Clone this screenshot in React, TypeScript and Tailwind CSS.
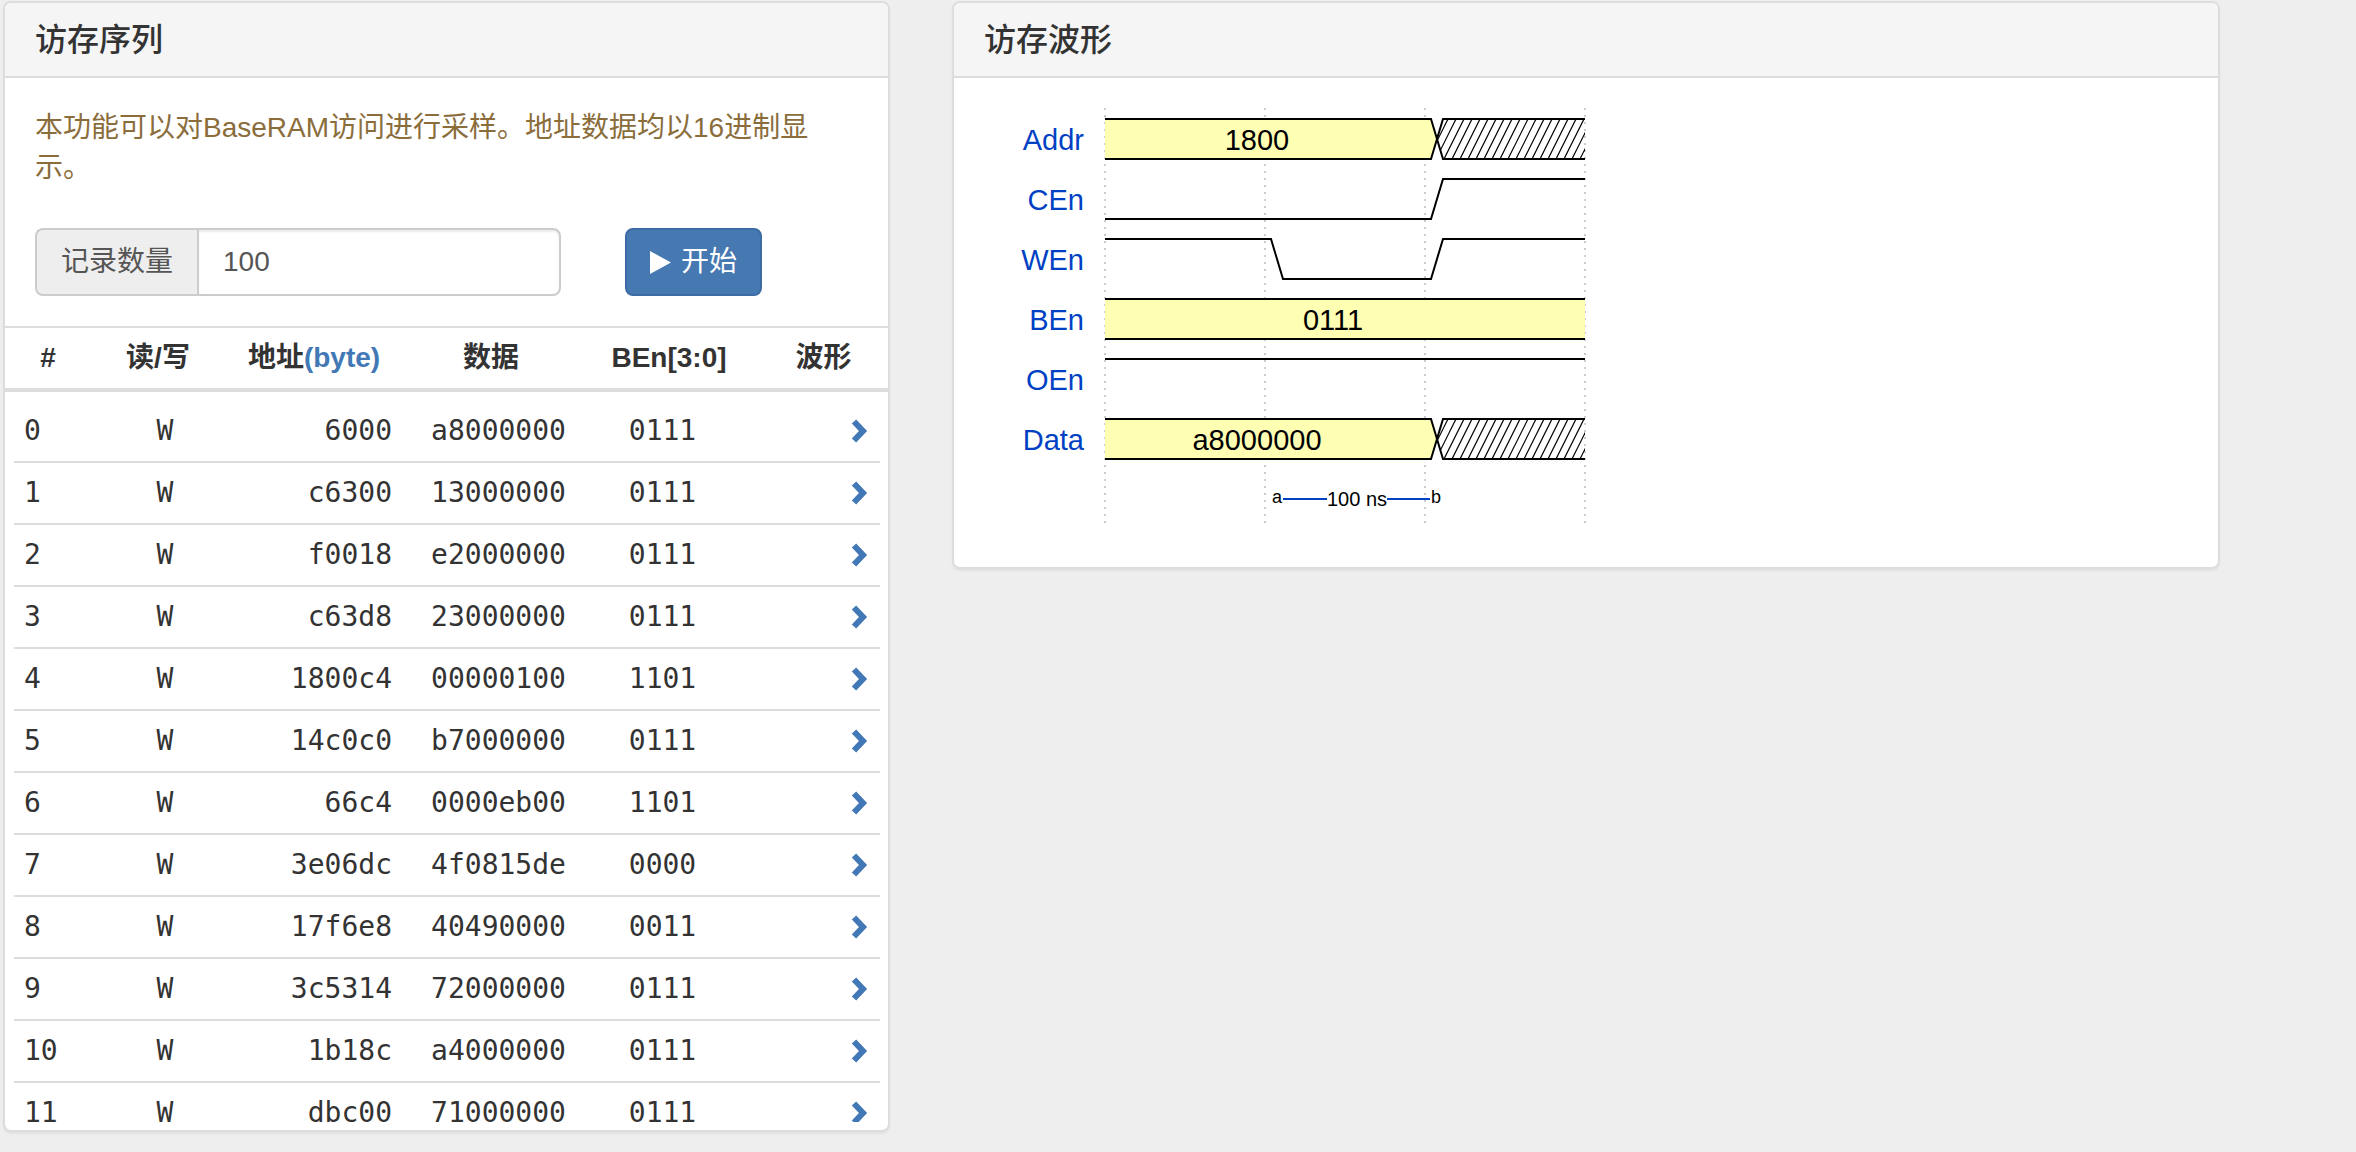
import React from "react";

type Row = { id: number; rw: string; addr: string; data: string; ben: string };

const rows: Row[] = [
  { id: 0, rw: "W", addr: "6000", data: "a8000000", ben: "0111" },
  { id: 1, rw: "W", addr: "c6300", data: "13000000", ben: "0111" },
  { id: 2, rw: "W", addr: "f0018", data: "e2000000", ben: "0111" },
  { id: 3, rw: "W", addr: "c63d8", data: "23000000", ben: "0111" },
  { id: 4, rw: "W", addr: "1800c4", data: "00000100", ben: "1101" },
  { id: 5, rw: "W", addr: "14c0c0", data: "b7000000", ben: "0111" },
  { id: 6, rw: "W", addr: "66c4", data: "0000eb00", ben: "1101" },
  { id: 7, rw: "W", addr: "3e06dc", data: "4f0815de", ben: "0000" },
  { id: 8, rw: "W", addr: "17f6e8", data: "40490000", ben: "0011" },
  { id: 9, rw: "W", addr: "3c5314", data: "72000000", ben: "0111" },
  { id: 10, rw: "W", addr: "1b18c", data: "a4000000", ben: "0111" },
  { id: 11, rw: "W", addr: "dbc00", data: "71000000", ben: "0111" },
  { id: 12, rw: "W", addr: "1b1a0", data: "a5000000", ben: "0111" },
];

const FONT = "Liberation Sans, Noto Sans CJK SC, sans-serif";
const GRID = [1105, 1265, 1425, 1585];
const LABELS = ["Addr", "CEn", "WEn", "BEn", "OEn", "Data"];

function Chevron() {
  return (
    <svg width="18" height="26" viewBox="0 0 18 26">
      <polyline
        points="4,3.5 13,13 4,22.5"
        fill="none"
        stroke="#4178b5"
        strokeWidth="6"
        strokeLinejoin="miter"
      />
    </svg>
  );
}

// hatched "x" region of a bus lane
function Hatch({ t, id }: { t: number; id: string }) {
  const b = t + 40;
  const m = t + 20;
  const lines = [];
  for (let x = 1420; x < 1590; x += 8) {
    lines.push(<line key={x} x1={x} y1={b} x2={x + 20} y2={t} stroke="#000" strokeWidth="1.2" />);
  }
  return (
    <g>
      <clipPath id={id}>
        <polygon points={`1443,${t} 1585,${t} 1585,${b} 1443,${b} 1437,${m}`} />
      </clipPath>
      <g clipPath={`url(#${id})`}>{lines}</g>
      <path d={`M1585 ${t} H1443 L1437 ${m} L1443 ${b} H1585`} fill="none" stroke="#000" strokeWidth="2" />
    </g>
  );
}

function Bus({ t, label, id }: { t: number; label: string; id: string }) {
  const b = t + 40;
  const m = t + 20;
  return (
    <g>
      <polygon points={`1105,${t} 1431,${t} 1437,${m} 1431,${b} 1105,${b}`} fill="#ffffb4" />
      <path d={`M1105 ${t} H1431 L1437 ${m} L1431 ${b} H1105`} fill="none" stroke="#000" strokeWidth="2" />
      <text x="1257" y={t + 31} fontSize="29" fontFamily={FONT} textAnchor="middle" fill="#000">
        {label}
      </text>
      <Hatch t={t} id={id} />
    </g>
  );
}

function Wave() {
  const top = (i: number) => 119 + 60 * i;
  return (
    <svg width="1204" height="429" viewBox="984 108 1204 429" className="block">
      {GRID.map((x) => (
        <line key={x} x1={x} y1="108" x2={x} y2="527" stroke="#999" strokeWidth="1" strokeDasharray="2 5" />
      ))}
      {LABELS.map((l, i) => (
        <text key={l} x="1084" y={top(i) + 31} fontSize="29" fontFamily={FONT} textAnchor="end" fill="#0041c4">
          {l}
        </text>
      ))}
      <Bus t={top(0)} label="1800" id="hatchA" />
      <path d={`M1105 ${top(1) + 40} H1431 L1443 ${top(1)} H1585`} fill="none" stroke="#000" strokeWidth="2" />
      <path
        d={`M1105 ${top(2)} H1271 L1283 ${top(2) + 40} H1431 L1443 ${top(2)} H1585`}
        fill="none"
        stroke="#000"
        strokeWidth="2"
      />
      <rect x="1105" y={top(3)} width="480" height="40" fill="#ffffb4" />
      <path d={`M1105 ${top(3)} H1585 M1105 ${top(3) + 40} H1585`} stroke="#000" strokeWidth="2" />
      <text x="1333" y={top(3) + 31} fontSize="29" fontFamily={FONT} textAnchor="middle" fill="#000">
        0111
      </text>
      <path d={`M1105 ${top(4)} H1585`} stroke="#000" strokeWidth="2" />
      <Bus t={top(5)} label="a8000000" id="hatchD" />
      {/* ruler */}
      <line x1="1283" y1="499" x2="1327" y2="499" stroke="#0041c4" strokeWidth="2" />
      <line x1="1387" y1="499" x2="1430" y2="499" stroke="#0041c4" strokeWidth="2" />
      <text x="1277" y="503" fontSize="18" fontFamily={FONT} textAnchor="middle" fill="#000">
        a
      </text>
      <text x="1357" y="506" fontSize="20" fontFamily={FONT} textAnchor="middle" fill="#000">
        100 ns
      </text>
      <text x="1436" y="503" fontSize="18" fontFamily={FONT} textAnchor="middle" fill="#000">
        b
      </text>
    </svg>
  );
}

function PanelHead({ title }: { title: string }) {
  return (
    <div className="h-[75px] bg-[#f5f5f5] border-b-2 border-[#dddddd] px-[30px] flex items-center rounded-t-[6px]">
      <h3 className="text-[32px] leading-[36px] font-medium text-[#333]">{title}</h3>
    </div>
  );
}

export default function App() {
  return (
    <div className="w-[2356px] h-[1152px] bg-[#eeeeee] pl-[3px] pt-[1px] flex items-start gap-[62px] text-[#333] [font-family:'Liberation_Sans','Noto_Sans_CJK_SC',sans-serif]">
      {/* access sequence */}
      <div className="w-[887px] shrink-0 bg-white border-2 border-[#dddddd] rounded-[8px] shadow-[0_2px_2px_rgba(0,0,0,0.05)] overflow-hidden">
        <PanelHead title="访存序列" />
        <div className="p-[30px]">
          <p className="text-[28px] leading-[40px] text-[#8a6d3b] whitespace-nowrap">
            本功能可以对BaseRAM访问进行采样。地址数据均以16进制显
            <br />
            示。
          </p>
          <div className="mt-[40px] flex items-center">
            <div className="flex h-[68px] w-[526px]">
              <span className="w-[162px] h-full flex items-center justify-center bg-[#eeeeee] border-2 border-r-0 border-[#cccccc] rounded-l-[8px] text-[28px] text-[#555]">
                记录数量
              </span>
              <input
                defaultValue="100"
                className="flex-1 min-w-0 h-full border-2 border-[#cccccc] rounded-r-[8px] px-[24px] text-[28px] text-[#555] shadow-[inset_0_2px_2px_rgba(0,0,0,0.075)] outline-none"
              />
            </div>
            <button className="ml-[64px] w-[137px] h-[68px] bg-[#4678b2] border-2 border-[#3d6ba3] rounded-[8px] flex items-center justify-center gap-[10px] text-white text-[28px]">
              <svg width="21" height="23" viewBox="0 0 21 23">
                <polygon points="0,0 21,11.5 0,23" fill="#fff" />
              </svg>
              <span>开始</span>
            </button>
          </div>
        </div>
        <div className="border-t-2 border-[#dddddd]">
          <div className="h-[64px] border-b-4 border-[#dddddd] flex text-[28px] leading-[40px] font-bold">
            <div className="w-[86px] pt-[10px] text-center">#</div>
            <div className="w-[134px] pt-[10px] text-center">读/写</div>
            <div className="w-[178px] pt-[10px] text-center">
              地址<span className="text-[#4178b5]">(byte)</span>
            </div>
            <div className="w-[176px] pt-[10px] text-center">数据</div>
            <div className="w-[180px] pt-[10px] text-center">BEn[3:0]</div>
            <div className="w-[129px] pt-[10px] text-center">波形</div>
          </div>
        </div>
        <div className="h-[730px] overflow-hidden pt-[9px] pl-[9px] pr-[8px]">
          {rows.map((r) => (
            <div
              key={r.id}
              className="h-[62px] border-b-2 border-[#dddddd] flex items-center text-[28px] leading-[40px] [font-family:'DejaVu_Sans_Mono',monospace]"
            >
              <div className="w-[106px] pl-[10px]">{r.id}</div>
              <div className="w-[90px] text-center">{r.rw}</div>
              <div className="w-[192px] pr-[10px] text-right">{r.addr}</div>
              <div className="w-[193px] text-center">{r.data}</div>
              <div className="w-[135px] text-center">{r.ben}</div>
              <div className="flex-1 flex justify-end pr-[12px]">
                <Chevron />
              </div>
            </div>
          ))}
        </div>
        <div className="h-[8px]" />
      </div>

      {/* waveform */}
      <div className="w-[1268px] shrink-0 bg-white border-2 border-[#dddddd] rounded-[8px] shadow-[0_2px_2px_rgba(0,0,0,0.05)] overflow-hidden">
        <PanelHead title="访存波形" />
        <div className="p-[30px]">
          <Wave />
        </div>
      </div>
    </div>
  );
}
